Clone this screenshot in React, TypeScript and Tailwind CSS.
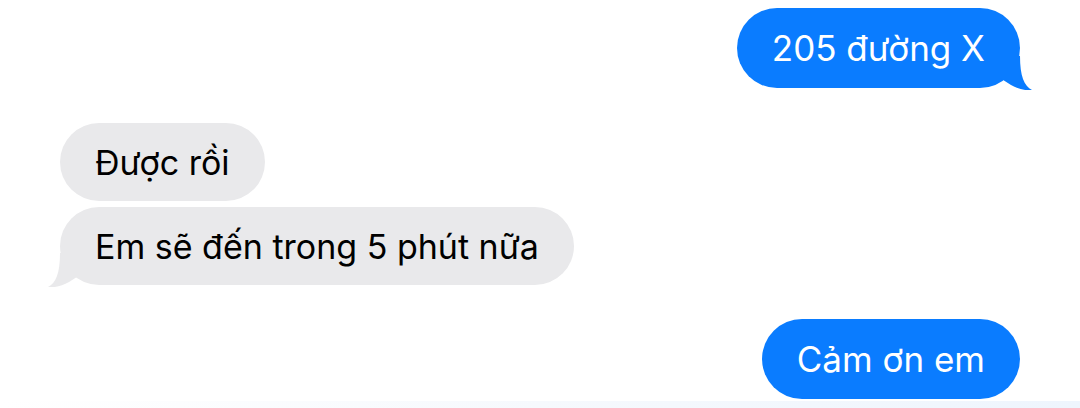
import React from "react";

const font = { fontFamily: "Inter, 'Noto Sans', sans-serif" };

function TailRight({ color }: { color: string }) {
  return (
    <svg className="absolute right-[-12px] bottom-[-2px]" width="32" height="34" viewBox="0 0 32 34">
      <path d="M0 0 L20 0 C20 20 24 30 32 34 C26 35 18 33 11 29 L0 22 Z" fill={color} />
    </svg>
  );
}

function TailLeft({ color }: { color: string }) {
  return (
    <svg className="absolute left-[-12px] bottom-[-2px]" width="32" height="34" viewBox="0 0 32 34">
      <path d="M32 0 L12 0 C12 20 8 30 0 34 C6 35 14 33 21 29 L32 22 Z" fill={color} />
    </svg>
  );
}

function Sent({ text, tail, className = "" }: { text: string; tail?: boolean; className?: string }) {
  return (
    <div className={`flex justify-end ${className}`}>
      <div className="relative h-[80px] flex items-center px-[35px] rounded-full bg-[#0a7cff] text-white text-[35px]">
        <span className="relative z-10">{text}</span>
        {tail && <TailRight color="#0a7cff" />}
      </div>
    </div>
  );
}

function Received({ text, tail, className = "" }: { text: string; tail?: boolean; className?: string }) {
  return (
    <div className={`flex justify-start ${className}`}>
      <div className="relative h-[78px] flex items-center px-[35px] rounded-full bg-[#e9e9eb] text-black text-[34px]">
        <span className="relative z-10">{text}</span>
        {tail && <TailLeft color="#e9e9eb" />}
      </div>
    </div>
  );
}

export default function App() {
  return (
    <div className="w-[1080px] h-[408px] bg-white overflow-hidden flex flex-col" style={font}>
      <div className="flex flex-col px-[60px] pt-[8px]">
        <Sent text="205 đường X" tail />
        <Received text="Được rồi" className="mt-[35px]" />
        <Received text="Em sẽ đến trong 5 phút nữa" tail className="mt-[6px]" />
        <Sent text="Cảm ơn em" className="mt-[34px]" />
      </div>
      <div className="mt-auto h-[7px] bg-gradient-to-r from-white via-[#f6f9fd] to-[#eef5fd]" />
    </div>
  );
}
